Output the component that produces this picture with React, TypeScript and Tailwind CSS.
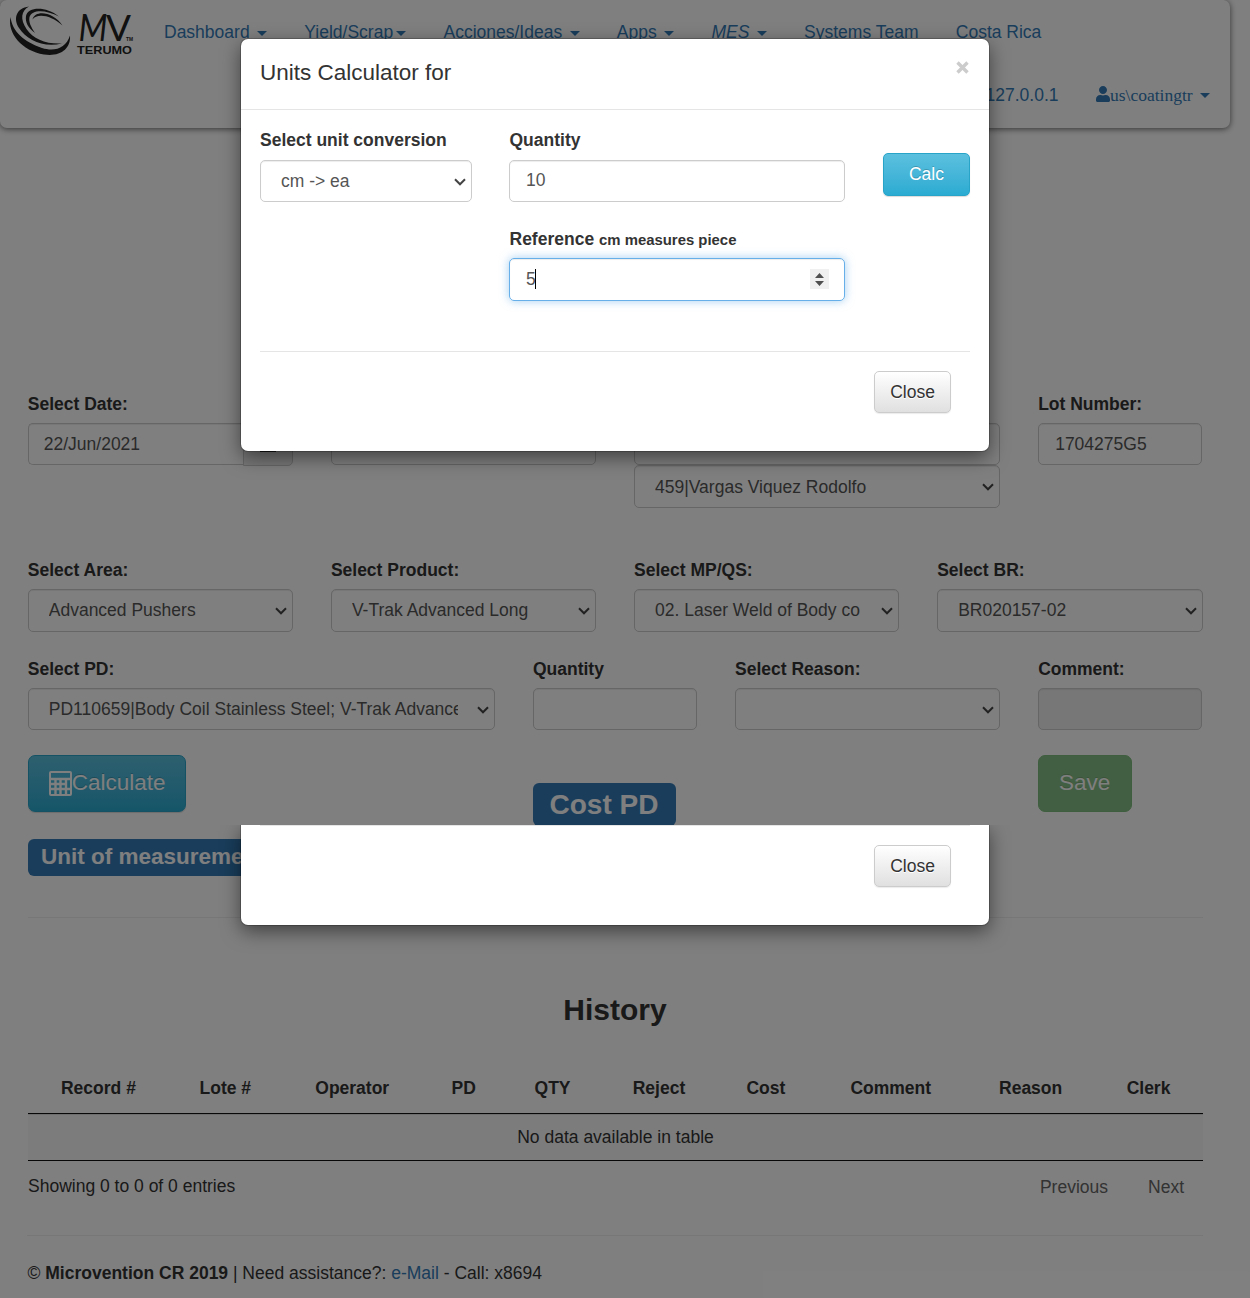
import type { ReactNode } from "react";
import { FaUser } from "react-icons/fa";

const inset = "shadow-[inset_0_1px_1px_rgba(0,0,0,0.075)]";

function Caret({ tight = false }: { tight?: boolean }) {
  return (
    <span
      className={
        "inline-block h-0 w-0 border-x-[5px] border-t-[5px] border-x-transparent border-t-[#337ab7] align-middle " +
        (tight ? "ml-[3px]" : "ml-[7.4px]")
      }
    />
  );
}

function Label({ children, className = "" }: { children: ReactNode; className?: string }) {
  return (
    <div className={"mb-[7px] h-[25px] font-bold leading-[25px] whitespace-nowrap " + className}>{children}</div>
  );
}

function FieldLabel({ children }: { children: ReactNode }) {
  return <Label className="leading-[27px]">{children}</Label>;
}

function Input({ value = "", className = "leading-[39px]" }: { value?: string; className?: string }) {
  return (
    <div className={"h-[42px] rounded-[5px] border border-[#ccc] px-[16px] text-[#555] " + inset + " " + className}>
      {value}
    </div>
  );
}

function Select({ value = "", className = "h-[42.5px]" }: { value?: string; className?: string }) {
  return (
    <div
      className={
        "flex items-center rounded-[5px] border border-[#ccc] pl-[20px] pr-[5px] text-[#555] " +
        inset +
        " " +
        className
      }
    >
      <span className="mr-[19px] flex-1 overflow-hidden leading-[40px] whitespace-nowrap">{value}</span>
      <svg width="12" height="8" viewBox="0 0 12 8" className="mt-px shrink-0">
        <path d="M1 1.300 L6 6.300 L11 1.300" fill="none" stroke="#444" strokeWidth="2" />
      </svg>
    </div>
  );
}

function Logo() {
  return (
    <svg width="136" height="60" viewBox="0 0 136 60" className="shrink-0" fill="#222">
      <path d="M10.500 17 C7 33 22 51 44 54.500 C60 57 71 49 70 35.500 C66 48 55 52 42 48 C24 42 12 31 10.500 17Z" />
      <path d="M29 6.500 C16 8 13 19 19 28 C27 40 43 48 62 43.500 C47 44.500 33 39 26.500 29 C20 19 21 11 29 6.500Z" />
      <path d="M59 16.500 C46 6 28 6.500 26 16 C25 22 28 28 35 33 C31 27 28.500 22 29.500 17 C32 9 46 9.500 59 16.500Z" />
      <path d="M62.500 25.500 C54 12 35 9 32.500 19.500 C37 13 51 15 62.500 25.500Z" />
      <text x="78.500" y="40.500" fontFamily="Lato" fontWeight="400" fontStyle="italic" fontSize="37" textLength="29" lengthAdjust="spacingAndGlyphs">
        M
      </text>
      <text x="106" y="40.500" fontFamily="Lato" fontWeight="400" fontSize="37" textLength="25" lengthAdjust="spacingAndGlyphs">
        V
      </text>
      <text x="126" y="41" fontFamily="Liberation Sans" fontWeight="700" fontSize="5.500" textLength="7" lengthAdjust="spacingAndGlyphs">
        TM
      </text>
      <text x="77" y="54" fontFamily="Liberation Sans" fontWeight="700" fontSize="10" textLength="55" lengthAdjust="spacingAndGlyphs">
        TERUMO
      </text>
    </svg>
  );
}

function CalculatorIcon() {
  return (
    <svg width="23" height="25" viewBox="0 0 23 25" className="-mt-px shrink-0">
      <rect x="1" y="1" width="21" height="23" rx="1" fill="none" stroke="#fff" strokeWidth="2" />
      <path
        d="M1 8H22 M1 13H17 M1 18H17 M6.500 8V24 M11.500 8V24 M17 8V24 M17 18H22"
        fill="none"
        stroke="#fff"
        strokeWidth="2.400"
      />
    </svg>
  );
}

function Header() {
  return (
    <header className="h-[128px] w-[1230px] rounded-[7px] text-[#337ab7] shadow-[0_1px_6px_rgba(0,0,0,0.6)]">
      <div className="flex h-[64px]">
        <Logo />
        <nav className="ml-[28px] flex gap-[37.3px] pt-[20px] leading-[25px] whitespace-nowrap">
          <span>Dashboard<Caret /></span>
          <span>Yield/Scrap<Caret tight /></span>
          <span>Acciones/Ideas<Caret /></span>
          <span>Apps<Caret /></span>
          <span><i>MES</i><Caret /></span>
          <span>Systems Team</span>
          <span>Costa Rica</span>
        </nav>
      </div>
      <div className="flex h-[64px] items-start justify-end gap-[37.5px] pr-[20px] pt-[19px] leading-[25px]">
        <span>127.0.0.1</span>
        <span className="flex h-[25px] items-center font-['Liberation_Serif']">
          <FaUser className="-mt-[3px] h-[16px] w-[14px]" />
          us\coatingtr
          <Caret />
        </span>
      </div>
    </header>
  );
}

const columns = ["Record #", "Lote #", "Operator", "PD", "QTY", "Reject", "Cost", "Comment", "Reason", "Clerk"];

function Page() {
  return (
    <div className="h-[1298px] w-[1250px] overflow-hidden bg-white">
      <Header />
      <main className="ml-[9px] w-[1212.500px] pt-[263px]">
        <section className="grid h-[166px] grid-cols-12 items-start *:pr-[19.200px] *:pl-[18.750px]">
          <div className="col-span-3">
            <FieldLabel>Select Date:</FieldLabel>
            <div className="flex">
              <Input value="22/Jun/2021" className="w-[215px] rounded-r-none border-r-0 !px-[15px] leading-[40px]" />
              <div className="flex h-[43px] flex-1 items-center justify-center rounded-r-[5px] border border-[#ccc] bg-[#eee]">
                <svg width="16" height="17" viewBox="0 0 16 17">
                  <path d="M1 3H15V15H1Z M1 6H15 M4 0V4 M12 0V4" fill="none" stroke="#333" strokeWidth="2" />
                </svg>
              </div>
            </div>
          </div>
          <div className="col-span-3">
            <FieldLabel>Select Shift:</FieldLabel>
            <Input />
          </div>
          <div className="col-span-4">
            <FieldLabel>Select Operator:</FieldLabel>
            <Input />
            <Select value="459|Vargas Viquez Rodolfo" className="h-[43px]" />
          </div>
          <div className="col-span-2">
            <FieldLabel>Lot Number:</FieldLabel>
            <Input value="1704275G5" className="leading-[41px]" />
          </div>
        </section>
        <section className="grid h-[99px] grid-cols-4 items-start *:pr-[19.200px] *:pl-[18.750px]">
          <div>
            <FieldLabel>Select Area:</FieldLabel>
            <Select value="Advanced Pushers" />
          </div>
          <div>
            <FieldLabel>Select Product:</FieldLabel>
            <Select value="V-Trak Advanced Long" />
          </div>
          <div>
            <FieldLabel>Select MP/QS:</FieldLabel>
            <Select value="02. Laser Weld of Body co" />
          </div>
          <div>
            <FieldLabel>Select BR:</FieldLabel>
            <Select value="BR020157-02" className="-mr-[0.6px] h-[42.5px]" />
          </div>
        </section>
        <section className="grid h-[99px] grid-cols-12 items-start *:pr-[19.200px] *:pl-[18.750px]">
          <div className="col-span-5">
            <FieldLabel>Select PD:</FieldLabel>
            <Select value="PD110659|Body Coil Stainless Steel; V-Trak Advanced" className="h-[42px]" />
          </div>
          <div className="col-span-2">
            <FieldLabel>Quantity</FieldLabel>
            <Input />
          </div>
          <div className="col-span-3">
            <FieldLabel>Select Reason:</FieldLabel>
            <Select className="h-[42px]" />
          </div>
          <div className="col-span-2">
            <FieldLabel>Comment:</FieldLabel>
            <Input className="bg-[#eee]" />
          </div>
        </section>
        <section className="grid h-[84px] grid-cols-12 items-start text-[22.500px] text-white *:px-[18.750px]">
          <div className="col-span-5">
            <div className="flex h-[57px] w-[158px] items-center rounded-[7px] border border-[#28a4c9] bg-linear-to-b from-[#5bc0de] to-[#2aabd2] pl-[20px] shadow-[0_1px_1px_rgba(0,0,0,0.15)] [text-shadow:0_-1px_0_rgba(0,0,0,0.2)]">
              <CalculatorIcon />
              <span className="-mt-[2px]">Calculate</span>
            </div>
          </div>
          <div className="col-span-5">
            <div className="mt-[28px] h-[43px] w-[143px] rounded-[6px] bg-[#337ab7] pr-px text-center text-[28px] font-bold leading-[43px]">
              Cost PD
            </div>
          </div>
          <div className="col-span-2">
            <div className="flex h-[57px] w-[94px] items-center justify-center rounded-[7px] border border-[#7fbd7f] bg-[#86be86] pr-px pb-[2px] [text-shadow:0_-1px_0_rgba(0,0,0,0.15)]">
              Save
            </div>
          </div>
        </section>
        <section className="ml-[19px] w-[1175px]">
          <div className="h-[37px] w-[252px] rounded-[6px] bg-[#337ab7] pl-[13px] text-[22.500px] font-bold leading-[35px] text-white">
            Unit of measurement
          </div>
          <div className="mt-[41px] border-t border-[#eee]" />
          <h3 className="mt-[72px] h-[40px] pr-px text-center text-[30px] font-bold leading-[40px]">History</h3>
          <div className="mt-[33px] grid h-[51px] grid-cols-[141fr_113fr_141fr_82fr_96fr_117fr_97fr_153fr_127fr_109fr] border-b border-[#111] text-center font-bold leading-[50px]">
            {columns.map((c) => (
              <span key={c}>{c}</span>
            ))}
          </div>
          <div className="h-[47px] border-t border-b border-t-[#ddd] border-b-[#111] bg-[#f9f9f9] text-center leading-[45px]">
            No data available in table
          </div>
          <div className="flex h-[74px] pt-[13px] leading-[25px]">
            <span className="flex-1">Showing 0 to 0 of 0 entries</span>
            <span className="mt-px mr-[40px] text-[#666]">Previous</span>
            <span className="mt-px mr-[19px] text-[#666]">Next</span>
          </div>
          <footer className="-ml-px border-t border-[#eee] pt-[25px] pl-[0.5px] leading-[25px]">
            © <b>Microvention CR 2019</b> | Need assistance?: <span className="text-[#337ab7]">e-Mail</span> - Call: x8694
          </footer>
        </section>
      </main>
    </div>
  );
}

const panel = "w-[748px] bg-white shadow-[0_0_0_1px_rgba(0,0,0,0.2),0_6px_19px_rgba(0,0,0,0.5)]";

function CloseRow() {
  return (
    <div className="mx-[19px] border-t border-[#e5e5e5] pt-[19px]">
      <div className="mr-[19px] ml-auto flex h-[42px] w-[77px] items-center justify-center rounded-[5px] border border-[#ccc] bg-linear-to-b from-white to-[#e0e0e0] shadow-[0_1px_1px_rgba(0,0,0,0.08)] [text-shadow:0_1px_0_#fff]">
        Close
      </div>
    </div>
  );
}

function UnitsDialog() {
  return (
    <div className={"absolute top-[39px] left-[241px] h-[412px] rounded-[7px] " + panel}>
      <div className="flex h-[71px] items-center justify-between border-b border-[#e5e5e5] pr-[20px] pb-[3px] pl-[19px]">
        <h4 className="text-[22.500px] leading-[32px]">Units Calculator for</h4>
        <svg width="13" height="13" viewBox="0 0 13 13" className="-mt-[10px]">
          <path d="M1.500 1.500L11.500 11.500M11.500 1.500L1.500 11.500" stroke="#ccc" strokeWidth="3.400" />
        </svg>
      </div>
      <div className="flex h-[241px] items-start pt-[18px] pl-[19px]">
        <div className="w-[212px]">
          <Label>Select unit conversion</Label>
          <Select value="cm -> ea" className="h-[42px]" />
        </div>
        <div className="ml-[37px] w-[336px]">
          <Label className="pl-[0.5px]">Quantity</Label>
          <Input value="10" className="mb-[24px] leading-[39px]" />
          <Label className="pl-[0.5px] leading-[27px]">
            Reference <span className="text-[14.900px]">cm measures piece</span>
          </Label>
          <div className="flex h-[43px] items-center justify-between rounded-[5px] border border-[#66afe9] pr-[15px] pl-[16px] text-[#555] shadow-[inset_0_1px_1px_rgba(0,0,0,0.075),0_0_10px_rgba(102,175,233,0.6)]">
            <span className="flex items-center">
              5<span className="-mt-px -ml-px h-[20px] w-px bg-black" />
            </span>
            <span className="-mt-px flex h-[20px] w-[19px] items-center justify-center bg-[#f0f0f0]">
              <svg width="9" height="13" viewBox="0 0 9 13" fill="#505050">
                <path d="M0 5L4.500 0L9 5Z M0 8L4.500 13L9 8Z" />
              </svg>
            </span>
          </div>
        </div>
        <div className="mt-[25px] ml-[38px] flex h-[43px] w-[87px] items-center justify-center rounded-[5px] border border-[#28a4c9] bg-linear-to-b from-[#5bc0de] to-[#2aabd2] text-white shadow-[0_1px_1px_rgba(0,0,0,0.15)] [text-shadow:0_-1px_0_rgba(0,0,0,0.2)]">
          Calc
        </div>
      </div>
      <CloseRow />
    </div>
  );
}

export default function App() {
  return (
    <div className="relative h-[1298px] w-[1250px] overflow-hidden font-['Liberation_Sans',Arial,sans-serif] text-[17.500px] text-[#333]">
      <Page />
      <div className="absolute inset-0 bg-black/50" />
      <div className="absolute top-[825px] left-0 h-[150px] w-full overflow-hidden">
        <div className={"ml-[241px] h-[100px] rounded-b-[7px] " + panel}>
          <CloseRow />
        </div>
      </div>
      <UnitsDialog />
    </div>
  );
}
